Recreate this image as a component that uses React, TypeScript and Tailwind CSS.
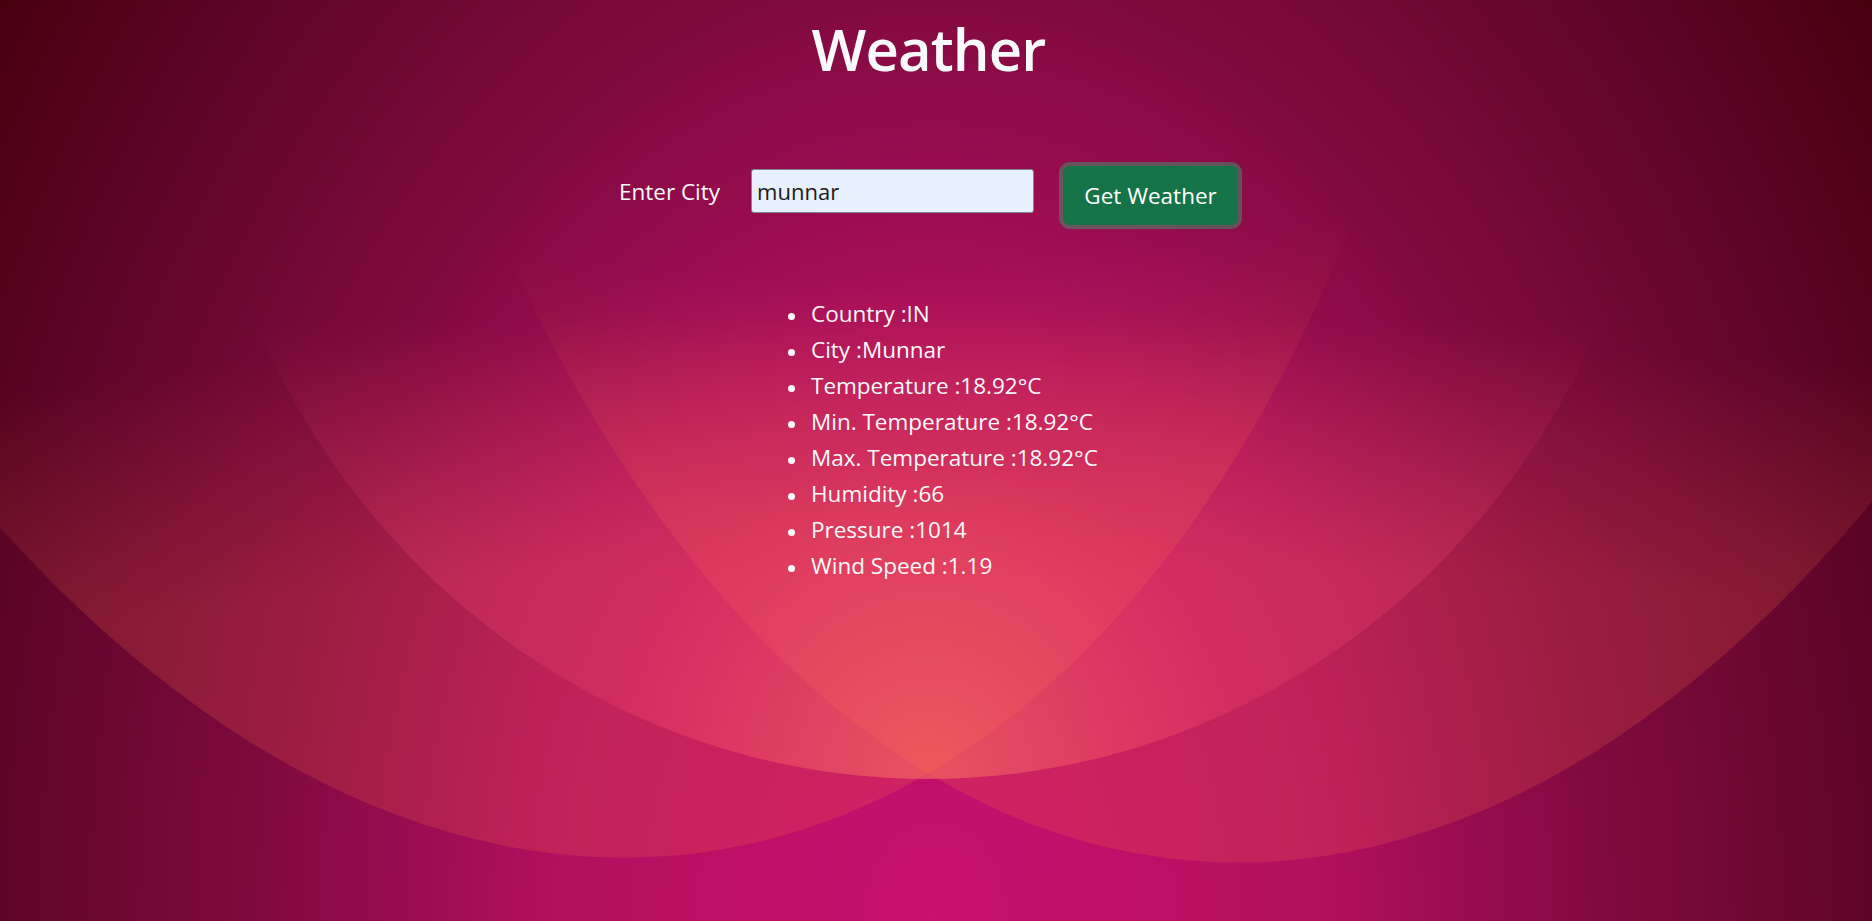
import React from "react";

type Pt = [number, number];

// least-squares conic fit -> rotated ellipse (cx, cy, rx, ry, deg)
const fitEllipse = (pts: Pt[]) => {
  const ox = 928;
  const oy = 400;
  const rows = pts.map(([x, y]) => {
    const u = (x - ox) / 1000;
    const v = (y - oy) / 1000;
    return [u * u, u * v, v * v, u, v];
  });
  const n = 5;
  const m: number[][] = [];
  for (let i = 0; i < n; i++) {
    m.push([]);
    for (let j = 0; j < n; j++) {
      m[i].push(rows.reduce((s, r) => s + r[i] * r[j], 0));
    }
    m[i].push(rows.reduce((s, r) => s + r[i], 0));
  }
  for (let c = 0; c < n; c++) {
    let p = c;
    for (let r = c + 1; r < n; r++) if (Math.abs(m[r][c]) > Math.abs(m[p][c])) p = r;
    [m[c], m[p]] = [m[p], m[c]];
    for (let r = 0; r < n; r++) {
      if (r === c) continue;
      const f = m[r][c] / m[c][c];
      for (let k = c; k <= n; k++) m[r][k] -= f * m[c][k];
    }
  }
  const [A, B, C, D, E] = m.map((row, i) => row[n] / row[i]);
  const det = 4 * A * C - B * B;
  const u0 = (B * E - 2 * C * D) / det;
  const v0 = (B * D - 2 * A * E) / det;
  const F = (D * u0 + E * v0) / 2 - 1;
  const t = 0.5 * Math.atan2(B, A - C);
  const c = Math.cos(t);
  const s = Math.sin(t);
  const l1 = A * c * c + B * c * s + C * s * s;
  const l2 = A * s * s - B * c * s + C * c * c;
  return {
    cx: ox + u0 * 1000,
    cy: oy + v0 * 1000,
    rx: Math.sqrt(-F / l1) * 1000,
    ry: Math.sqrt(-F / l2) * 1000,
    deg: (t * 180) / Math.PI,
  };
};

const cusp: Pt = [928, 779];
const repeat = (p: Pt, k: number): Pt[] => Array.from({ length: k }, () => p);

const leftPetal = fitEllipse([
  [0, 513], [82, 620], [163, 697], [245, 747], [327, 780], [408, 810],
  [490, 833], [571, 847], [640, 853], [830, 820], ...repeat(cusp, 8),
  [988, 726], [1087, 625], [1187, 518], [1286, 373], [1286, 373],
]);

const rightPetal = fitEllipse([
  [565, 373], [565, 373], [669, 518], [769, 625], [868, 726], ...repeat(cusp, 8),
  [1030, 817], [1232, 853], [1354, 840], [1477, 807], [1599, 753],
  [1681, 700], [1763, 627], [1824, 560], [1872, 490],
]);

const Petal = ({ e, fill }: { e: ReturnType<typeof fitEllipse>; fill: string }) =>
  Number.isFinite(e.rx) && Number.isFinite(e.ry) ? (
    <ellipse
      cx={e.cx}
      cy={e.cy}
      rx={e.rx}
      ry={e.ry}
      transform={`rotate(${e.deg} ${e.cx} ${e.cy})`}
      fill={fill}
    />
  ) : null;

const Bloom = () => (
  <svg className="absolute inset-0 h-full w-full" viewBox="0 0 1872 921" preserveAspectRatio="none">
    <defs>
      <linearGradient id="petalFade" gradientUnits="userSpaceOnUse" x1="0" y1="320" x2="0" y2="560">
        <stop offset="0" stopColor="#ff6a45" stopOpacity="0" />
        <stop offset="1" stopColor="#ff6a45" stopOpacity="0.2" />
      </linearGradient>
      <linearGradient id="centerFade" gradientUnits="userSpaceOnUse" x1="0" y1="320" x2="0" y2="580">
        <stop offset="0" stopColor="#ff4f78" stopOpacity="0" />
        <stop offset="1" stopColor="#ff4f78" stopOpacity="0.22" />
      </linearGradient>
      <radialGradient id="glow" gradientUnits="userSpaceOnUse" cx="928" cy="770" r="330">
        <stop offset="0" stopColor="#ff8a55" stopOpacity="0.42" />
        <stop offset="1" stopColor="#ff6a60" stopOpacity="0" />
      </radialGradient>
      <clipPath id="centerClip">
        <ellipse cx="928" cy="14" rx="735" ry="765" />
      </clipPath>
    </defs>
    <Petal e={leftPetal} fill="url(#petalFade)" />
    <Petal e={rightPetal} fill="url(#petalFade)" />
    <ellipse cx="928" cy="14" rx="735" ry="765" fill="url(#centerFade)" />
    <rect x="0" y="0" width="1872" height="921" fill="url(#glow)" clipPath="url(#centerClip)" />
  </svg>
);

const rows = [
  "Country :IN",
  "City :Munnar",
  "Temperature :18.92°C",
  "Min. Temperature :18.92°C",
  "Max. Temperature :18.92°C",
  "Humidity :66",
  "Pressure :1014",
  "Wind Speed :1.19",
];

export default function App() {
  return (
    <div className="relative h-screen overflow-hidden bg-[radial-gradient(1000px_1400px_at_50%_100%,#c8106e_0%,#b3105f_38%,#a00d55_49%,#820a40_66%,#5e0528_94%,#48000f_114%)] font-['Open_Sans',sans-serif] text-[#f8f9fa]">
      <Bloom />
      <div className="relative flex flex-col items-center pr-[15px]">
        <h1 className="mt-[13px] text-[58px] font-semibold leading-[72px] tracking-[-0.015em]">Weather</h1>

        <div className="mt-[81px] flex items-start">
          <label className="mt-[8px] text-[22.5px] leading-[36px]">Enter City</label>
          <input
            defaultValue="munnar"
            className="ml-[31px] mt-[3px] h-[44px] w-[283px] rounded-[3px] border border-[#7d8794] bg-[#e8f0fe] px-[5px] text-[22px] text-[#1b1b1b] outline-none"
          />
          <button className="ml-[29px] h-[59px] w-[175px] rounded-[7px] bg-[#157347] text-[22.5px] text-white shadow-[0_0_0_4px_rgba(60,153,110,0.5)]">
            Get Weather
          </button>
        </div>

        <ul className="mt-[71px] w-[400px] pl-[59px]">
          {rows.map((r) => (
            <li key={r} className="flex items-center whitespace-nowrap text-[22.5px] leading-[36px]">
              <span className="mt-[4px] mr-[16.5px] h-[7px] w-[7px] shrink-0 rounded-full bg-[#f8f9fa]" />
              {r}
            </li>
          ))}
        </ul>
      </div>
    </div>
  );
}
